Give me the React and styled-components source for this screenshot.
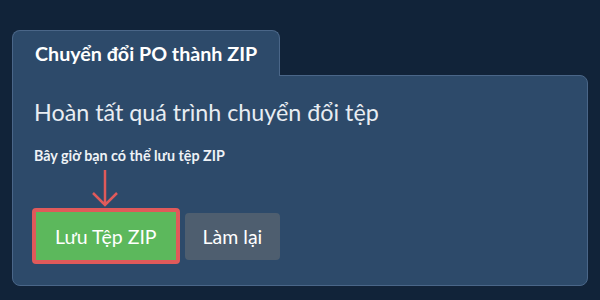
import React from 'react';
import styled, { createGlobalStyle } from 'styled-components';

const GlobalStyle = createGlobalStyle`
  html, body {
    margin: 0;
    padding: 0;
    background: #112339;
  }
  body {
    font-family: Lato, "Noto Sans", sans-serif;
    color: #ffffff;
  }
`;

const Page = styled.div`
  width: 600px;
  height: 300px;
  box-sizing: border-box;
  padding: 30px 12px 0 12px;
  background: #112339;
`;

const Wrapper = styled.div`
  width: 576px;
  display: flex;
  flex-direction: column;
`;

const Tab = styled.div`
  position: relative;
  z-index: 1;
  align-self: flex-start;
  width: 268px;
  height: 46px;
  box-sizing: border-box;
  margin-bottom: -1px;
  padding-left: 22px;
  display: flex;
  align-items: center;
  background: #2d4a6a;
  border: 1px solid #4a6688;
  border-bottom: none;
  border-radius: 8px 8px 0 0;
  font-size: 19.7px;
  font-weight: 700;
  color: #ffffff;
`;

const Panel = styled.div`
  height: 211px;
  box-sizing: border-box;
  padding: 22px 21px 0 21px;
  background: #2d4a6a;
  border: 1px solid #4a6688;
  border-radius: 0 8px 8px 8px;
`;

const Heading = styled.h2`
  margin: 0;
  font-size: 23.3px;
  font-weight: 400;
  line-height: 28px;
  color: #e8edf2;
`;

const Hint = styled.p`
  margin: 21px 0 0 0;
  font-size: 14.3px;
  font-weight: 700;
  line-height: 18px;
  color: #eef2f6;
`;

const ArrowBox = styled.div`
  height: 39px;
  padding-left: 57px;
  margin-top: 4px;
`;

const Actions = styled.div`
  display: flex;
  align-items: center;
  gap: 5px;
  margin-left: -2px;
`;

const Button = styled.button`
  font-family: Lato, "Noto Sans", sans-serif;
  font-size: 19.5px;
  color: #ffffff;
  border-radius: 4px;
  cursor: pointer;
  box-sizing: border-box;
  height: ${p => (p.$primary ? '56px' : '47px')};
  padding: ${p => (p.$primary ? '0 19px' : '0 18px')};
  background: ${p => (p.$primary ? '#5cb85c' : '#4e5e6f')};
  border: ${p => (p.$primary ? '4px solid #e05a5a' : 'none')};
`;

const DownArrow = () => (
  <svg width="28" height="38" viewBox="0 0 28 38">
    <path
      d="M14 1 V35 M2 24 L14 36 L26 24"
      fill="none"
      stroke="#e05a5a"
      strokeWidth="2.5"
    />
  </svg>
);

export default function App() {
  return (
    <>
      <GlobalStyle />
      <Page>
        <Wrapper>
          <Tab>Chuyển đổi PO thành ZIP</Tab>
          <Panel>
            <Heading>Hoàn tất quá trình chuyển đổi tệp</Heading>
            <Hint>Bây giờ bạn có thể lưu tệp ZIP</Hint>
            <ArrowBox>
              <DownArrow />
            </ArrowBox>
            <Actions>
              <Button $primary>Lưu Tệp ZIP</Button>
              <Button>Làm lại</Button>
            </Actions>
          </Panel>
        </Wrapper>
      </Page>
    </>
  );
}
